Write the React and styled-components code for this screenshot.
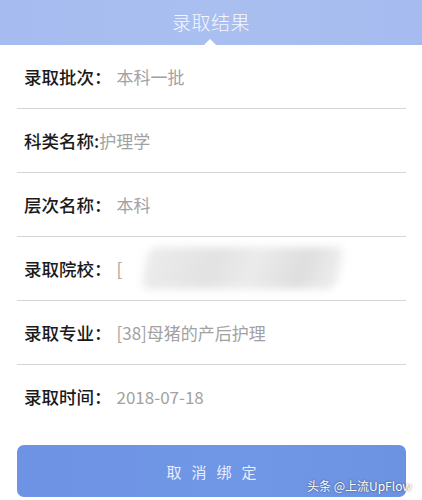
import React from 'react';
import styled, { createGlobalStyle } from 'styled-components';

const GlobalStyle = createGlobalStyle`
  html, body {
    margin: 0;
    padding: 0;
    background: #fff;
  }
  body {
    font-family: "Noto Sans CJK SC", "Noto Sans", sans-serif;
  }
`;

const rows = [
  { label: '录取批次：', value: '本科一批' },
  { label: '科类名称:', value: '护理学', tight: true },
  { label: '层次名称：', value: '本科' },
  { label: '录取院校：', value: '[', blurred: true },
  { label: '录取专业：', value: '[38]母猪的产后护理' },
  { label: '录取时间：', value: '2018-07-18' },
];

const App = () => {
  return (
    <Page>
      <GlobalStyle />
      <Header>
        <Title>录取结果</Title>
        <Notch />
      </Header>
      <List>
        {rows.map((r, i) => (
          <Row key={r.label} last={i === rows.length - 1}>
            <Label>{r.label}</Label>
            <Value tight={r.tight}>{r.value}</Value>
            {r.blurred && <Smudge />}
          </Row>
        ))}
      </List>
      <Footer>
        <Button>取消绑定</Button>
        <Watermark>头条 @上流UpFlow</Watermark>
      </Footer>
    </Page>
  );
};

const Page = styled.div`
  width: 422px;
  height: 500px;
  overflow: hidden;
  background: #fff;
  display: flex;
  flex-direction: column;
`;

const Header = styled.div`
  position: relative;
  height: 45px;
  background: linear-gradient(90deg, #a6bcf0, #a9bff0 50%, #a6bbef);
  display: flex;
  align-items: center;
  justify-content: center;
`;

const Title = styled.div`
  color: #f4f7ff;
  font-size: 19px;
  font-weight: 300;
  letter-spacing: 0.5px;
  margin-top: -3px;
`;

const Notch = styled.div`
  position: absolute;
  left: 204px;
  bottom: 0;
  width: 0;
  height: 0;
  border-left: 6px solid transparent;
  border-right: 6px solid transparent;
  border-bottom: 6px solid #fff;
`;

const List = styled.div`
  display: flex;
  flex-direction: column;
  padding: 0 16px 0 17px;
`;

const Row = styled.div`
  position: relative;
  height: 63px;
  display: flex;
  align-items: center;
  padding-left: 7px;
  border-bottom: ${(p) => (p.last ? 'none' : '1px solid #d6d6d6')};
`;

const Label = styled.span`
  font-size: 17.5px;
  color: #1a1a1a;
  font-weight: 500;
`;

const Value = styled.span`
  font-size: 17px;
  color: #a2a2a2;
  margin-left: ${(p) => (p.tight ? '0' : '5px')};
`;

const Smudge = styled.div`
  position: absolute;
  left: 128px;
  top: 10px;
  width: 195px;
  height: 42px;
  background: linear-gradient(100deg, #ececec 0%, #e2e2e2 35%, #ebebeb 55%, #dedede 80%, #efefef 100%);
  filter: blur(4px);
  border-radius: 8px;
  transform: skewX(-10deg);
`;

const Footer = styled.div`
  position: relative;
  flex: 1;
  display: flex;
  align-items: flex-end;
  padding: 0 16px 3px 17px;
`;

const Button = styled.div`
  width: 100%;
  height: 52px;
  border-radius: 7px;
  background: linear-gradient(90deg, #6e92e4, #7097e6 60%, #6c92e2);
  color: #e8eeff;
  font-size: 15px;
  letter-spacing: 10px;
  display: flex;
  align-items: center;
  justify-content: center;
  padding-left: 10px;
  box-sizing: border-box;
`;

const Watermark = styled.div`
  position: absolute;
  right: 10px;
  bottom: 6px;
  color: #fff;
  font-size: 12px;
  text-shadow: 0 0 2px rgba(0, 0, 0, 0.6);
`;

export default App;
